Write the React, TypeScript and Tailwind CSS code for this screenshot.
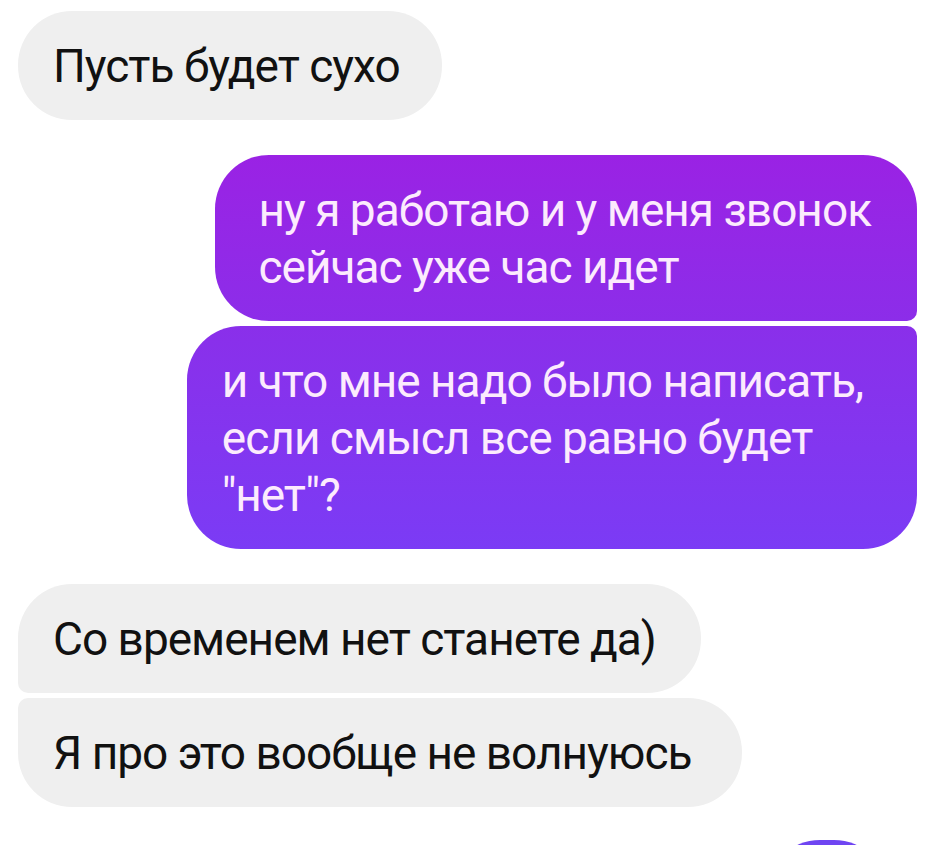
import React from 'react';

type Msg = {
    text: string[];
    mine: boolean;
    corners: string;
    pad: string;
    bg?: string;
};

const messages: Msg[][] = [
    [{ text: ['Пусть будет сухо'], mine: false, corners: 'rounded-[54px]', pad: 'pl-[35px] pr-[42px]' }],
    [
        {
            text: ['ну я работаю и у меня звонок', 'сейчас уже час идет'],
            mine: true,
            corners: 'rounded-[54px] rounded-br-[10px]',
            pad: 'pl-[44px] pr-[46px]',
            bg: 'bg-gradient-to-b from-[#9a22e4] to-[#8c2de9]',
        },
        {
            text: ['и что мне надо было написать,', 'если смысл все равно будет', '"нет"?'],
            mine: true,
            corners: 'rounded-[54px] rounded-tr-[10px]',
            pad: 'pl-[35px] pr-[54px]',
            bg: 'bg-gradient-to-b from-[#8a2fea] to-[#7b3bf5]',
        },
    ],
    [
        { text: ['Со временем нет станете да)'], mine: false, corners: 'rounded-[54px] rounded-bl-[10px]', pad: 'pl-[35px] pr-[45px]' },
        { text: ['Я про это вообще не волнуюсь'], mine: false, corners: 'rounded-[54px] rounded-tl-[10px]', pad: 'pl-[35px] pr-[51px]' },
    ],
];

const Bubble: React.FC<{ m: Msg }> = ({ m }) => (
    <div
        className={`pt-[27px] pb-[25px] leading-[57px] text-[46px] tracking-[-1px] ${m.corners} ${m.pad} ${
            m.mine ? `self-end ${m.bg} text-[#fcebfd]` : 'self-start bg-[#efefef] text-[#111111]'
        }`}
    >
        {m.text.map((line, i) => (
            <div key={i} className="whitespace-nowrap">{line}</div>
        ))}
    </div>
);

export default function App() {
    return (
        <div className="w-[941px] h-[845px] overflow-hidden bg-white font-['Roboto',sans-serif] pl-[18px] pr-[24px] pt-[11px] flex flex-col gap-[35px]">
            {messages.map((group, gi) => (
                <div key={gi} className="flex flex-col gap-[5px]">
                    {group.map((m, i) => (
                        <Bubble key={i} m={m} />
                    ))}
                </div>
            ))}
            <div className="self-end -mt-[2px] mr-[29px] w-[122px] h-[60px] shrink-0 rounded-t-[54px] bg-[#6f45f2]" />
        </div>
    );
}
